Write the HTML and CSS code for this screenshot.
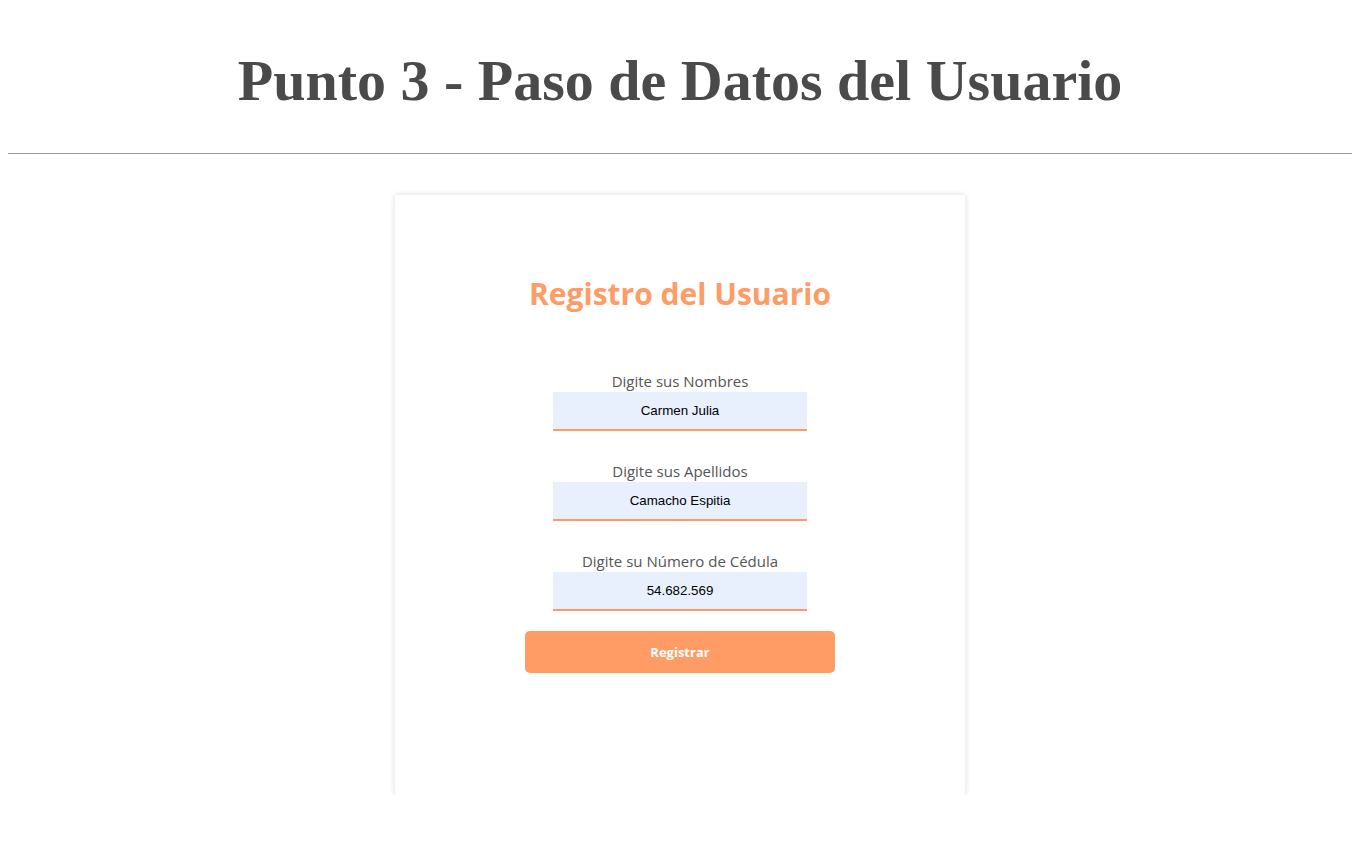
FILE: index.html
```html
<!DOCTYPE html>
<html lang="es">
<head>
<meta charset="utf-8">
<title>Punto 3</title>
<link rel="stylesheet" href="styles.css">
</head>
<body>
<h1 class="title">Punto 3 - Paso de Datos del Usuario</h1>
<hr class="rule">
<main class="card">
  <h2 class="card-title">Registro del Usuario</h2>
  <form class="form">
    <div class="field">
      <label class="label" for="nombres">Digite sus Nombres</label>
      <input class="input" id="nombres" type="text" value="Carmen Julia">
    </div>
    <div class="field">
      <label class="label" for="apellidos">Digite sus Apellidos</label>
      <input class="input" id="apellidos" type="text" value="Camacho Espitia">
    </div>
    <div class="field">
      <label class="label" for="cedula">Digite su Número de Cédula</label>
      <input class="input" id="cedula" type="text" value="54.682.569">
    </div>
    <button class="btn" type="button">Registrar</button>
  </form>
</main>
</body>
</html>
```
FILE: styles.css
```css
body {
  margin: 8px;
  background: #ffffff;
  font-family: "Liberation Serif", serif;
}
.title {
  font-family: "Liberation Serif", "Times New Roman", serif;
  font-weight: bold;
  font-size: 58px;
  line-height: 64px;
  color: #4a4a4a;
  text-align: center;
  margin: 41px 0 0;
}
.rule {
  margin: 40px 0 0;
  border: 0;
  border-top: 1px solid #999999;
  height: 0;
}
.card {
  width: 570px;
  height: 600px;
  box-sizing: border-box;
  margin: 41px auto 0;
  background: #fff;
  box-shadow: 0 0 6px rgba(0, 0, 0, 0.15);
  display: flex;
  flex-direction: column;
  align-items: center;
  padding-top: 79px;
}
.card-title {
  font-family: "Open Sans", "Noto Sans", sans-serif;
  font-weight: 700;
  font-size: 30px;
  line-height: 40px;
  color: #ff9c66;
  margin: 0;
}
.form {
  display: flex;
  flex-direction: column;
  align-items: center;
  margin-top: 57px;
}
.field {
  display: flex;
  flex-direction: column;
  align-items: center;
  margin-bottom: 30px;
}
.field:nth-last-child(2) {
  margin-bottom: 20px;
}
.label {
  font-family: "Open Sans", "Noto Sans", sans-serif;
  font-size: 15px;
  line-height: 21px;
  color: #555555;
}
.input {
  width: 254px;
  height: 39px;
  box-sizing: border-box;
  border: 0;
  border-bottom: 2px solid #ff9c66;
  background: #e8f0fe;
  text-align: center;
  font-family: "Liberation Sans", Arial, sans-serif;
  font-size: 13.333px;
  color: #000;
  padding: 0;
  outline: none;
}
.btn {
  width: 310px;
  height: 42px;
  border: 0;
  border-radius: 5px;
  background: #ff9c66;
  color: #fff;
  font-family: "Open Sans", "Noto Sans", sans-serif;
  font-weight: 700;
  font-size: 13px;
}
```
